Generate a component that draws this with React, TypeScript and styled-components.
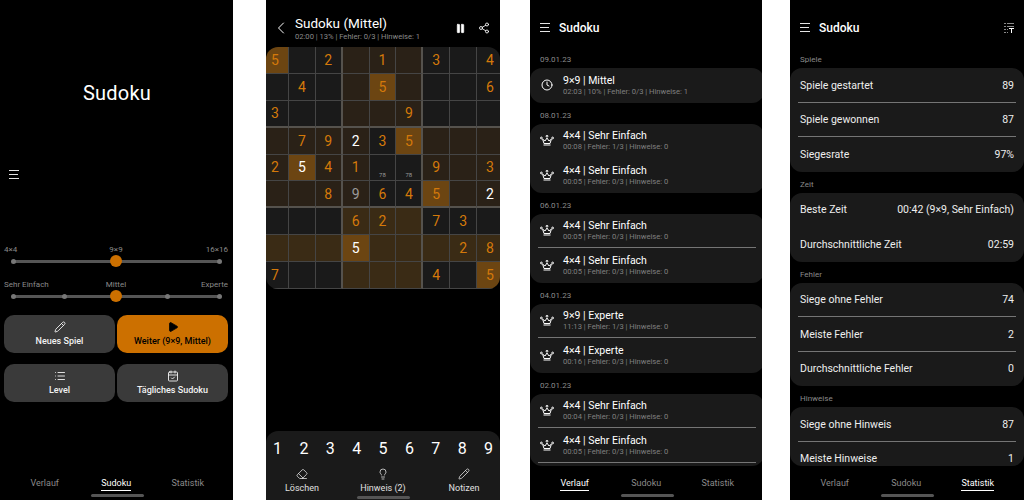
import React from 'react';
import styled, { createGlobalStyle } from 'styled-components';
import {
  CalendarCheck,
  ChevronLeft,
  Clock,
  Eraser,
  Lightbulb,
  List,
  Pause,
  Pencil,
  Play,
  Share2,
} from 'lucide-react';

const ORANGE = '#cc7000';

const board = [
  ['5', '', '2', '', '1', '', '3', '', '4'],
  ['', '4', '', '', '5', '', '', '', '6'],
  ['3', '', '', '', '', '9', '', '', ''],
  ['', '7', '9', '2w', '3', '5', '', '', ''],
  ['2', '5w', '4', '1', 'n', 'n', '9', '', '3'],
  ['', '', '8', '9g', '6', '4', '5', '', '2w'],
  ['', '', '', '6', '2', '', '7', '3', ''],
  ['', '', '', '5w', '', '', '', '2', '8'],
  ['7', '', '', '', '', '', '4', '', '5'],
];

const tones = [
  'sddtttddd',
  'dddtstddd',
  'dddtttddd',
  'ttttdsttt',
  'tsttddttt',
  'ttttddstt',
  'dddlllddd',
  'lllslllll',
  'dddllldds',
];

const toneColors: Record<string, string> = {
  d: '#1a1a1a',
  t: '#2a2117',
  l: '#3a2b15',
  s: '#6c4512',
};

const history = [
  { date: '09.01.23', rows: [{ title: '9×9 | Mittel', sub: '02:03 | 10% | Fehler: 0/3 | Hinweise: 1', clock: true }] },
  {
    date: '08.01.23',
    plain: true,
    rows: [
      { title: '4×4 | Sehr Einfach', sub: '00:08 | Fehler: 1/3 | Hinweise: 0' },
      { title: '4×4 | Sehr Einfach', sub: '00:05 | Fehler: 0/3 | Hinweise: 0' },
    ],
  },
  {
    date: '06.01.23',
    rows: [
      { title: '4×4 | Sehr Einfach', sub: '00:05 | Fehler: 0/3 | Hinweise: 0' },
      { title: '4×4 | Sehr Einfach', sub: '00:05 | Fehler: 0/3 | Hinweise: 0' },
    ],
  },
  {
    date: '04.01.23',
    rows: [
      { title: '9×9 | Experte', sub: '11:13 | Fehler: 1/3 | Hinweise: 0' },
      { title: '4×4 | Experte', sub: '00:16 | Fehler: 0/3 | Hinweise: 0' },
    ],
  },
  {
    date: '02.01.23',
    open: true,
    rows: [
      { title: '4×4 | Sehr Einfach', sub: '00:04 | Fehler: 0/3 | Hinweise: 0' },
      { title: '4×4 | Sehr Einfach', sub: '00:05 | Fehler: 0/3 | Hinweise: 0' },
    ],
  },
];

const stats = [
  {
    label: 'Spiele',
    rows: [
      ['Spiele gestartet', '89'],
      ['Spiele gewonnen', '87'],
      ['Siegesrate', '97%'],
    ],
  },
  {
    label: 'Zeit',
    plain: true,
    rows: [
      ['Beste Zeit', '00:42 (9×9, Sehr Einfach)'],
      ['Durchschnittliche Zeit', '02:59'],
    ],
  },
  {
    label: 'Fehler',
    rows: [
      ['Siege ohne Fehler', '74'],
      ['Meiste Fehler', '2'],
      ['Durchschnittliche Fehler', '0'],
    ],
  },
  {
    label: 'Hinweise',
    rows: [
      ['Siege ohne Hinweis', '87'],
      ['Meiste Hinweise', '1'],
    ],
  },
];

function CrownIcon() {
  return (
    <svg width="14" height="11" viewBox="0 0 14 11" fill="none" stroke="#fff" strokeWidth="1">
      <path d="M2.6 4.2 L4 8.5 H10 L11.4 4.2 L9 6 L7 3 L5 6 Z" strokeLinejoin="round" />
      <path d="M3.5 10 H10.5" />
      <circle cx="1.4" cy="3" r="0.9" />
      <circle cx="7" cy="1.2" r="0.9" />
      <circle cx="12.6" cy="3" r="0.9" />
    </svg>
  );
}

function MenuIcon() {
  return (
    <svg width="10" height="10" viewBox="0 0 10 10" stroke="#e4e4e4" strokeWidth="1">
      <path d="M0 0.5 H10 M0 4.5 H9 M0 8.5 H10" />
    </svg>
  );
}

function SortIcon() {
  return (
    <svg width="10" height="10" viewBox="0 0 10 10" stroke="#8a8a8a" strokeWidth="1" fill="none">
      <path d="M0 0.5 H2 M3 0.5 H10 M0 3.5 H2 M3 3.5 H10 M0 6.5 H2 M0 9.5 H2 M3 6.5 H4 M3 9.5 H4" />
      <path d="M5 5.5 H10 M7.5 5.5 V10" stroke="#fff" />
    </svg>
  );
}

function BottomNav({ active }: { active: string }) {
  return (
    <>
      <Nav>
        {['Verlauf', 'Sudoku', 'Statistik'].map((tab) => (
          <NavItem key={tab}>
            <NavLabel $active={tab === active}>{tab}</NavLabel>
          </NavItem>
        ))}
      </Nav>
      <Handle />
    </>
  );
}

function Slider({ labels, dots, top }: { labels: string[]; dots: number[]; top: number }) {
  return (
    <SliderBlock $top={top}>
      <SliderLabels>
        <span>{labels[0]}</span>
        <span>{labels[1]}</span>
        <span>{labels[2]}</span>
      </SliderLabels>
      <Track>
        {dots.map((left) => (
          <Dot key={left} style={{ left: `${left}%` }} />
        ))}
        <Thumb />
      </Track>
    </SliderBlock>
  );
}

function HomeScreen() {
  return (
    <Screen>
      <HomeTitle>Sudoku</HomeTitle>
      <HomeMenu>
        <MenuIcon />
      </HomeMenu>
      <Slider top={65} labels={['4×4', '9×9', '16×16']} dots={[0, 100]} />
      <Slider top={17} labels={['Sehr Einfach', 'Mittel', 'Experte']} dots={[0, 25, 75, 100]} />
      <ButtonGrid>
        <ActionButton>
          <Pencil size={12} strokeWidth={1.8} />
          Neues Spiel
        </ActionButton>
        <ActionButton $primary>
          <Play size={12} fill="#000" strokeWidth={1.5} />
          Weiter (9×9, Mittel)
        </ActionButton>
        <ActionButton>
          <List size={12} strokeWidth={1.8} />
          Level
        </ActionButton>
        <ActionButton>
          <CalendarCheck size={12} strokeWidth={1.8} />
          Tägliches Sudoku
        </ActionButton>
      </ButtonGrid>
      <BottomNav active="Sudoku" />
    </Screen>
  );
}

function GameScreen() {
  return (
    <Screen>
      <GameHeader>
        <ChevronLeft size={20} strokeWidth={1.2} />
        <GameTitles>
          <GameTitle>Sudoku (Mittel)</GameTitle>
          <GameSub>02:00 | 13% | Fehler: 0/3 | Hinweise: 1</GameSub>
        </GameTitles>
        <GameIcons>
          <Pause size={11} fill="#fff" strokeWidth={1.5} />
          <Share2 size={12} strokeWidth={1.7} />
        </GameIcons>
      </GameHeader>
      <BoardClip>
        <Board>
          {board.map((row, r) =>
            row.map((value, c) => (
              <Cell
                key={`${r}-${c}`}
                $tone={toneColors[tones[r][c]]}
                $thickRight={c === 2 || c === 5}
                $thickBottom={r === 2 || r === 5}
              >
                {value === 'n' ? (
                  <Note>78</Note>
                ) : (
                  <Digit $kind={value[1]}>{value[0]}</Digit>
                )}
              </Cell>
            )),
          )}
        </Board>
      </BoardClip>
      <Keypad>
        <Numbers>
          {[1, 2, 3, 4, 5, 6, 7, 8, 9].map((n) => (
            <span key={n}>{n}</span>
          ))}
        </Numbers>
        <Tools>
          <Tool>
            <Eraser size={12} strokeWidth={1.6} />
            Löschen
          </Tool>
          <Tool>
            <Lightbulb size={12} strokeWidth={1.6} />
            Hinweis (2)
          </Tool>
          <Tool>
            <Pencil size={12} strokeWidth={1.6} />
            Notizen
          </Tool>
        </Tools>
        <KeypadHandle />
      </Keypad>
    </Screen>
  );
}

function HistoryScreen() {
  return (
    <Screen>
      <ListHeader>
        <MenuIcon />
        <ListTitle>Sudoku</ListTitle>
      </ListHeader>
      <Scroll>
        {history.map((group) => (
          <div key={group.date}>
            <SectionLabel>{group.date}</SectionLabel>
            <Card $open={group.open}>
              {group.rows.map((row, i) => (
                <HistoryRow
                  key={i}
                  $divider={group.open || (!group.plain && i < group.rows.length - 1)}
                >
                  <RowIcon>
                    {'clock' in row ? <Clock size={12} strokeWidth={2} /> : <CrownIcon />}
                  </RowIcon>
                  <div>
                    <RowTitle>{row.title}</RowTitle>
                    <RowSub>{row.sub}</RowSub>
                  </div>
                </HistoryRow>
              ))}
            </Card>
          </div>
        ))}
      </Scroll>
      <BottomNav active="Verlauf" />
    </Screen>
  );
}

function StatsScreen() {
  return (
    <Screen>
      <ListHeader>
        <MenuIcon />
        <ListTitle>Sudoku</ListTitle>
        <SortSlot>
          <SortIcon />
        </SortSlot>
      </ListHeader>
      <Scroll>
        {stats.map((group) => (
          <div key={group.label}>
            <SectionLabel>{group.label}</SectionLabel>
            <Card $open={group.label === 'Hinweise'}>
              {group.rows.map(([name, value], i) => (
                <StatRow key={name} $divider={!group.plain && i < group.rows.length - 1}>
                  <span>{name}</span>
                  <span>{value}</span>
                </StatRow>
              ))}
            </Card>
          </div>
        ))}
      </Scroll>
      <BottomNav active="Statistik" />
    </Screen>
  );
}

export default function App() {
  return (
    <>
      <GlobalStyle />
      <Page>
        <Phone $width={233} $gap={33}>
          <HomeScreen />
        </Phone>
        <Phone $width={234} $gap={30}>
          <GameScreen />
        </Phone>
        <Phone $width={232} $gap={28}>
          <HistoryScreen />
        </Phone>
        <Phone $width={234} $gap={0}>
          <StatsScreen />
        </Phone>
      </Page>
    </>
  );
}

const GlobalStyle = createGlobalStyle`
  html, body {
    margin: 0;
    background: #fff;
    font-family: Roboto, "Liberation Sans", sans-serif;
    overflow: hidden;
  }
`;

const Page = styled.div`
  display: flex;
  width: 1024px;
  height: 500px;
`;

const Phone = styled.div<{ $width: number; $gap: number }>`
  flex: none;
  width: ${(p) => p.$width}px;
  margin-right: ${(p) => p.$gap}px;
  height: 500px;
  background: #000;
  color: #fff;
  overflow: hidden;
`;

const Screen = styled.div`
  display: flex;
  flex-direction: column;
  width: 234px;
  height: 500px;
`;

const Nav = styled.div`
  display: grid;
  grid-template-columns: repeat(3, 71.5px);
  padding-left: 9px;
  margin-top: auto;
`;

const NavItem = styled.div`
  text-align: center;
  font-size: 9px;
  line-height: 11px;
`;

const NavLabel = styled.span<{ $active: boolean }>`
  display: inline-block;
  padding-bottom: 1px;
  color: ${(p) => (p.$active ? '#fff' : '#8a8a8a')};
  border-bottom: 1px solid ${(p) => (p.$active ? '#fff' : 'transparent')};
`;

const Handle = styled.div`
  flex: none;
  width: 53px;
  height: 3px;
  margin: 3px auto 3px;
  border-radius: 2px;
  background: #555;
`;

const KeypadHandle = styled(Handle)`
  margin: 2px auto 0;
`;

const HomeTitle = styled.div`
  margin-top: 80px;
  text-align: center;
  font-size: 20px;
  line-height: 26px;
  letter-spacing: 0.2px;
`;

const HomeMenu = styled.div`
  display: flex;
  margin: 64px 0 0 9px;
  height: 10px;
`;

const SliderBlock = styled.div<{ $top: number }>`
  padding: 0 6px 0 4px;
  margin-top: ${(p) => p.$top}px;
`;

const SliderLabels = styled.div`
  display: grid;
  grid-template-columns: 1fr auto 1fr;
  font-size: 8px;
  line-height: 10px;
  color: #8a8a8a;
  span:last-child {
    text-align: right;
  }
`;

const Track = styled.div`
  position: relative;
  height: 3px;
  margin: 5px 9px 0;
  background: #555;
  border-radius: 2px;
`;

const Dot = styled.div`
  position: absolute;
  top: -1px;
  width: 5px;
  height: 5px;
  margin-left: -2.5px;
  border-radius: 50%;
  background: #777;
`;

const Thumb = styled.div`
  position: absolute;
  left: 50%;
  top: -5px;
  width: 12px;
  height: 12px;
  margin-left: -6px;
  border-radius: 50%;
  background: ${ORANGE};
`;

const ButtonGrid = styled.div`
  display: grid;
  grid-template-columns: 111px 111px;
  grid-auto-rows: 38px;
  column-gap: 2px;
  row-gap: 11px;
  padding-left: 4px;
  margin-top: 17px;
`;

const ActionButton = styled.div<{ $primary?: boolean }>`
  display: flex;
  flex-direction: column;
  align-items: center;
  justify-content: center;
  gap: 3px;
  border-radius: 10px;
  font-size: 9px;
  line-height: 11px;
  font-weight: 500;
  background: ${(p) => (p.$primary ? ORANGE : '#3a3a3a')};
  color: ${(p) => (p.$primary ? '#000' : '#f2f2f2')};
`;

const GameHeader = styled.div`
  display: flex;
  align-items: center;
  box-sizing: border-box;
  flex: none;
  height: 47px;
  padding: 9px 10px 0 4.5px;
`;

const GameTitles = styled.div`
  margin-left: 4.5px;
  flex: 1;
`;

const GameTitle = styled.div`
  font-size: 13.5px;
  line-height: 16px;
`;

const GameSub = styled.div`
  font-size: 7.6px;
  line-height: 10px;
  color: #8a8a8a;
  margin-top: 1px;
`;

const GameIcons = styled.div`
  display: flex;
  align-items: center;
  gap: 12px;
`;

const BoardClip = styled.div`
  flex: none;
  height: 242px;
  overflow: hidden;
  border-radius: 12px;
`;

const Board = styled.div`
  display: grid;
  grid-template-columns: repeat(9, 1fr);
  grid-template-rows: repeat(9, 1fr);
  width: 242px;
  height: 242px;
  margin-left: -4px;
`;

const Cell = styled.div<{ $tone: string; $thickRight: boolean; $thickBottom: boolean }>`
  display: flex;
  align-items: center;
  justify-content: center;
  position: relative;
  box-sizing: border-box;
  background: ${(p) => p.$tone};
  border-right: ${(p) => (p.$thickRight ? '2px solid #55524d' : '1px solid #454545')};
  border-bottom: ${(p) => (p.$thickBottom ? '2px solid #55524d' : '1px solid #454545')};
`;

const Digit = styled.span<{ $kind?: string }>`
  font-size: 14px;
  color: ${(p) => (p.$kind === 'w' ? '#fff' : p.$kind === 'g' ? '#9a9a9a' : '#d4790a')};
`;

const Note = styled.span`
  position: absolute;
  bottom: 2px;
  left: 0;
  right: 0;
  text-align: center;
  font-size: 6px;
  line-height: 7px;
  color: #9a9a9a;
`;

const Keypad = styled.div`
  margin-top: auto;
  height: 69px;
  border-radius: 12px 12px 0 0;
  background: #1a1a1a;
`;

const Numbers = styled.div`
  display: flex;
  justify-content: space-between;
  padding: 8px 7px 0;
  font-size: 16px;
  line-height: 19px;
`;

const Tools = styled.div`
  display: flex;
  justify-content: space-between;
  margin-top: 10px;
`;

const Tool = styled.div`
  display: flex;
  flex-direction: column;
  align-items: center;
  gap: 3px;
  width: 72px;
  font-size: 9px;
  line-height: 11px;
  color: #e0e0e0;
`;

const ListHeader = styled.div`
  display: flex;
  align-items: center;
  box-sizing: border-box;
  flex: none;
  height: 47px;
  padding: 9px 10px 0;
`;

const ListTitle = styled.div`
  margin-left: 9px;
  font-size: 12px;
  font-weight: 500;
`;

const SortSlot = styled.div`
  display: flex;
  margin-left: auto;
`;

const Scroll = styled.div`
  height: 419px;
  flex: none;
  overflow: hidden;
  border-radius: 0 0 12px 12px;
`;

const SectionLabel = styled.div`
  margin: 8px 0 3px 10px;
  font-size: 8px;
  line-height: 10px;
  color: #8a8a8a;
`;

const Card = styled.div<{ $open?: boolean }>`
  border-radius: 12px;
  background: #1a1a1a;
  padding-bottom: ${(p) => (p.$open ? '20px' : '0')};
`;

const HistoryRow = styled.div<{ $divider: boolean }>`
  display: flex;
  align-items: center;
  position: relative;
  box-sizing: border-box;
  height: 34.5px;
  padding-left: 10px;
  &::after {
    content: '';
    display: ${(p) => (p.$divider ? 'block' : 'none')};
    position: absolute;
    left: 8px;
    right: 8px;
    bottom: 0;
    height: 1px;
    background: #757575;
  }
`;

const RowIcon = styled.div`
  display: flex;
  justify-content: center;
  width: 14px;
  margin-right: 9px;
`;

const RowTitle = styled.div`
  font-size: 10.5px;
  line-height: 13px;
`;

const RowSub = styled.div`
  font-size: 7.6px;
  line-height: 10px;
  color: #808080;
`;

const StatRow = styled(HistoryRow)`
  justify-content: space-between;
  padding-right: 10px;
  font-size: 10.5px;
  color: #eee;
`;
